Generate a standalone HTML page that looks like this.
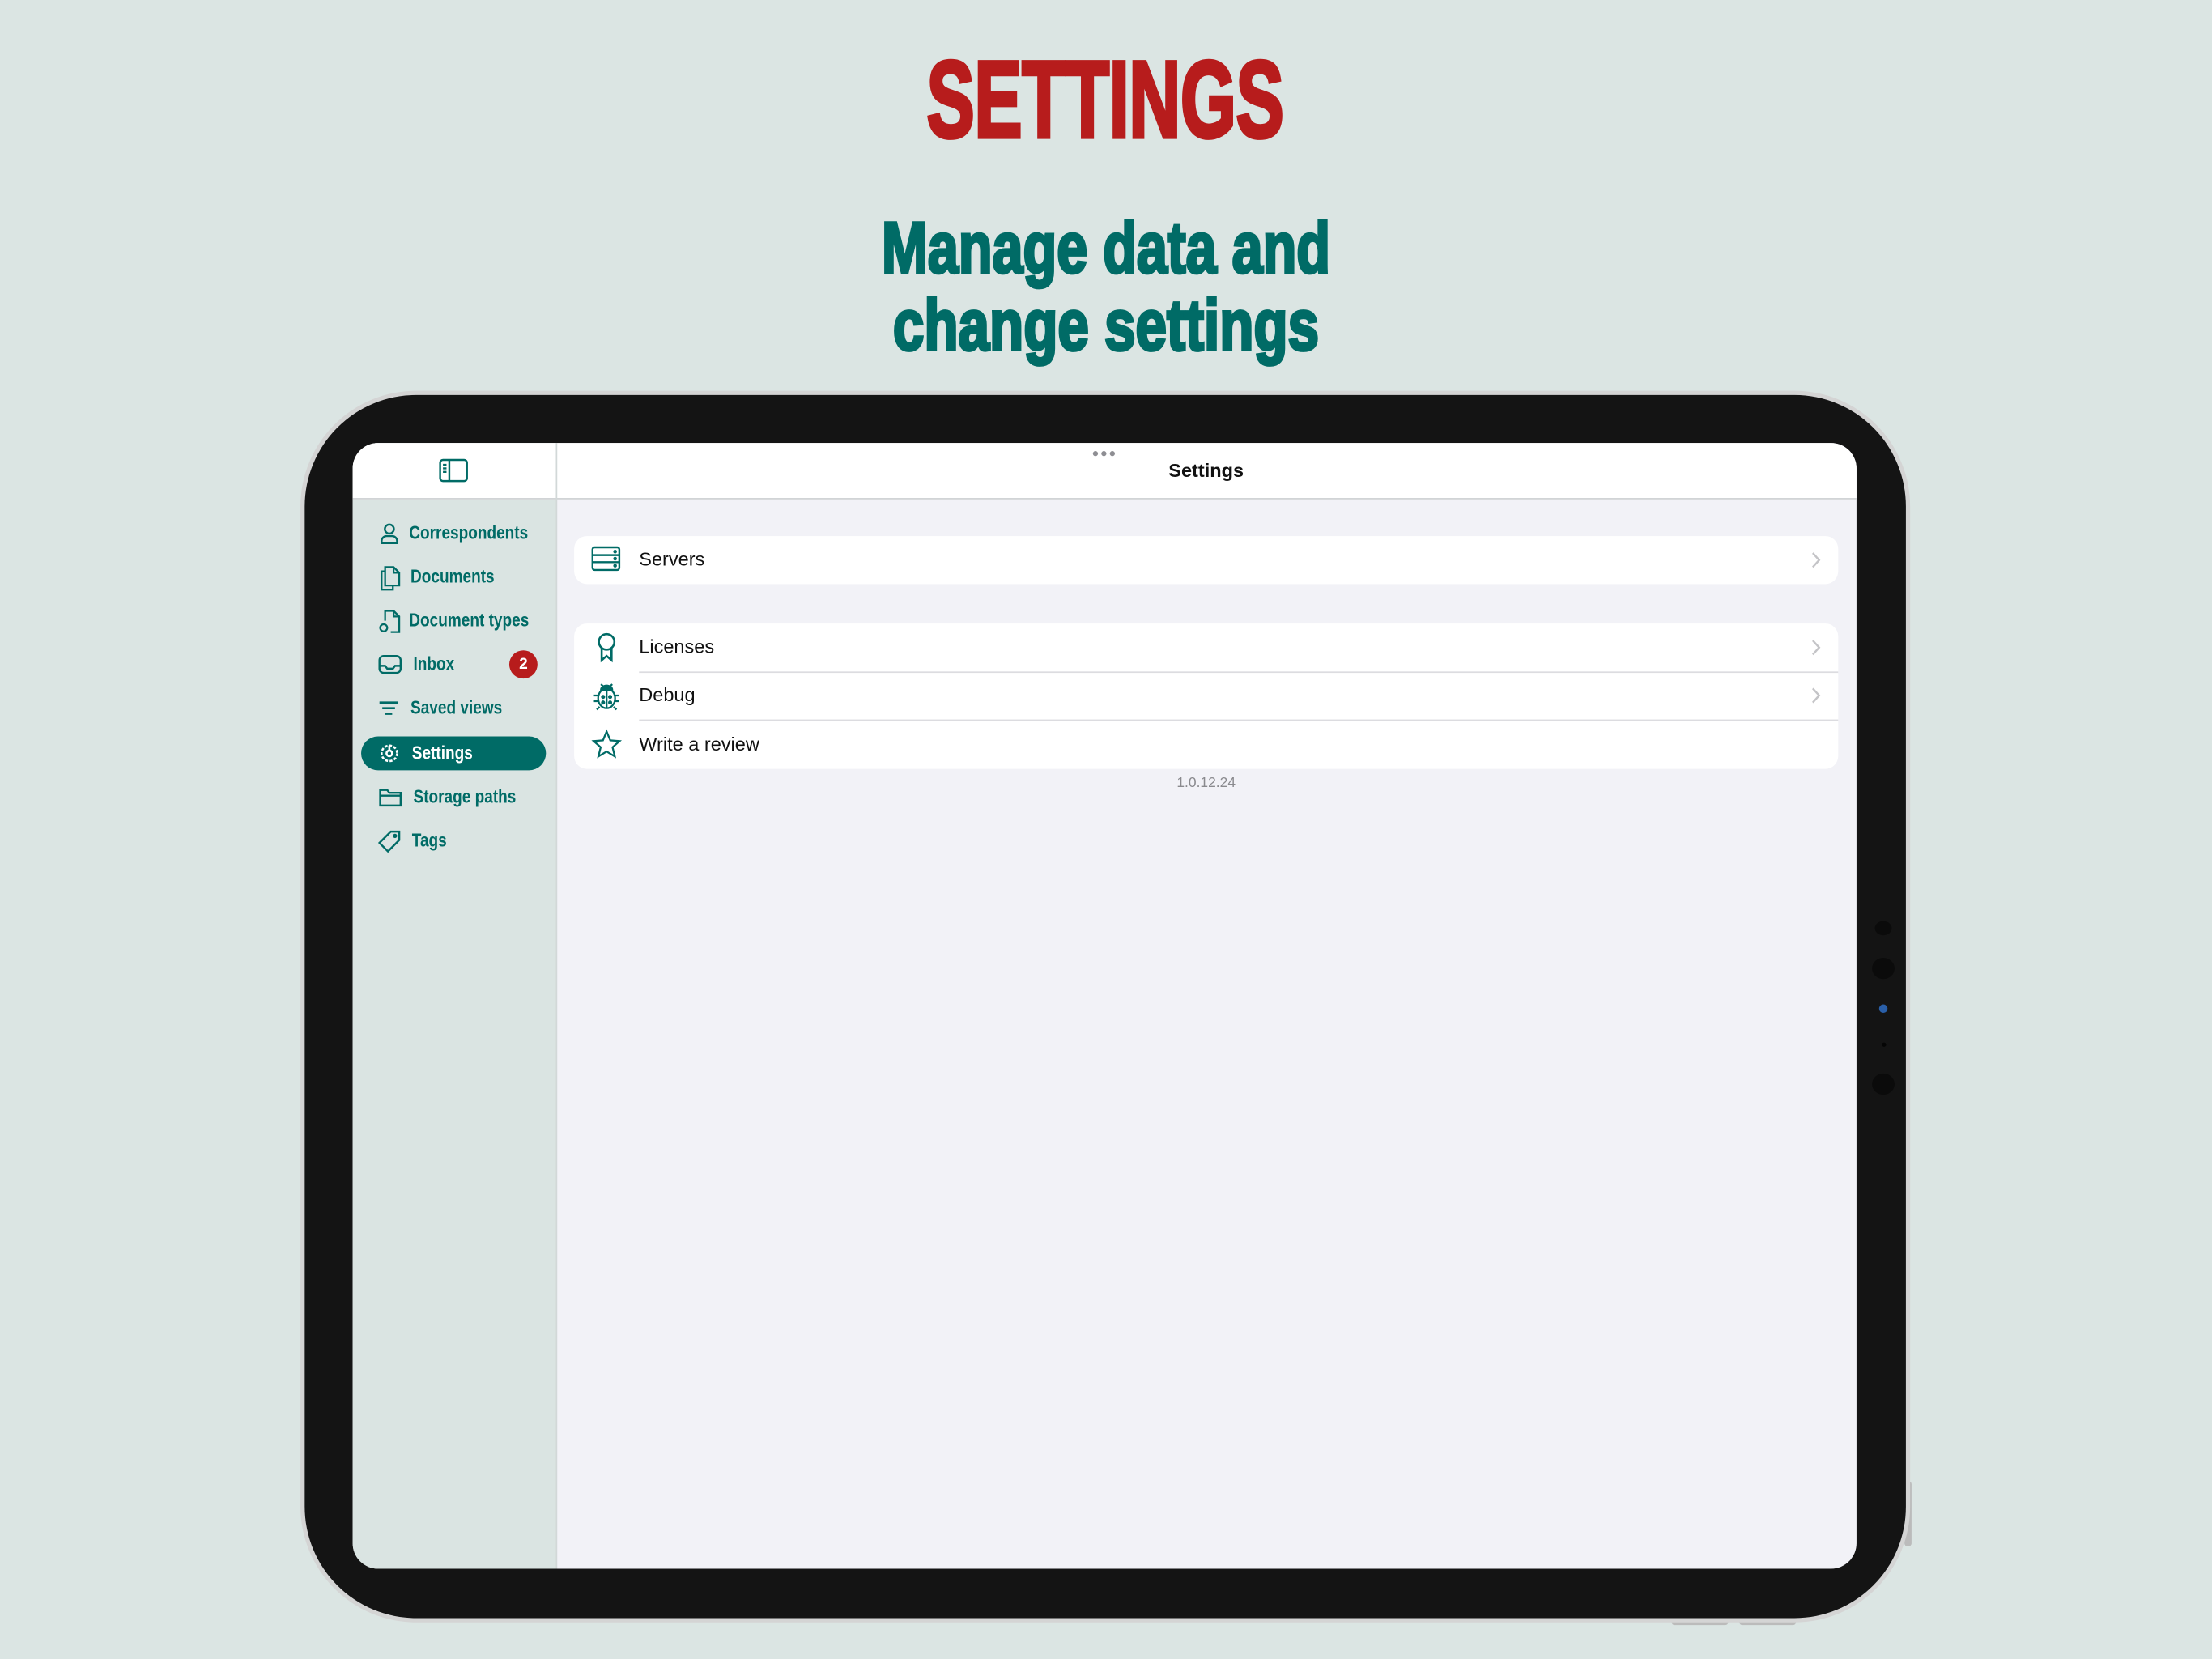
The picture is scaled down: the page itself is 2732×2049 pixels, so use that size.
<!DOCTYPE html>
<html><head><meta charset="utf-8">
<style>
html,body{margin:0;padding:0;width:2732px;height:2048px;overflow:hidden;background:#dbe5e3;}
#w{position:absolute;left:0;top:0;width:1568px;height:1176px;transform:scale(1.742347);transform-origin:0 0;font-family:"Liberation Sans",sans-serif;}
.abs{position:absolute}
.nav{position:absolute;left:262px;height:24px;line-height:24px;font-family:"Liberation Sans",sans-serif;font-weight:bold;font-size:13px;color:#006b66;}
.nav svg{position:absolute;left:6px;top:4px}
.nav span{position:absolute;left:28px;white-space:nowrap;transform:scaleX(0.84);transform-origin:0 50%}
.card{position:absolute;left:407px;width:896px;background:#fff;border-radius:9px;}
.row{position:absolute;left:0;width:896px;height:34px;}
.row .t{position:absolute;left:46px;top:0;line-height:34px;font-size:13.5px;color:#111;}
.row .ic{position:absolute;left:12px;top:6px}
.chev{position:absolute;right:12px;top:11px}
.sep{position:absolute;left:46px;right:0;height:1px;background:#dcdce0}
</style></head><body>
<div id="w">
<svg class="abs" style="left:0;top:0" width="1568" height="270">
<text x="657" y="97" textLength="253" lengthAdjust="spacingAndGlyphs" font-family="Liberation Sans Narrow, Liberation Sans, sans-serif" font-weight="bold" font-size="77" fill="#b71c1c" stroke="#b71c1c" stroke-width="3">SETTINGS</text>
<text x="625" y="193" textLength="318" lengthAdjust="spacingAndGlyphs" font-family="Liberation Sans Narrow, Liberation Sans, sans-serif" font-weight="bold" font-size="51" fill="#006b66" stroke="#006b66" stroke-width="2.2">Manage data and</text>
<text x="633" y="248" textLength="302" lengthAdjust="spacingAndGlyphs" font-family="Liberation Sans Narrow, Liberation Sans, sans-serif" font-weight="bold" font-size="51" fill="#006b66" stroke="#006b66" stroke-width="2.2">change settings</text>
</svg>
<!-- device -->
<div class="abs" style="left:1350px;top:1050px;width:5px;height:46px;background:#bbb;border-radius:2px"></div>
<div class="abs" style="left:1185px;top:1147px;width:40px;height:5px;background:#bbb;border-radius:2px"></div>
<div class="abs" style="left:1233px;top:1147px;width:40px;height:5px;background:#bbb;border-radius:2px"></div>
<div class="abs" style="left:213px;top:277px;width:1141px;height:873px;border-radius:82px;background:#d4d4d4;"></div>
<div class="abs" style="left:216px;top:280px;width:1135px;height:867px;border-radius:79px;background:#141414;"></div>
<div class="abs" style="left:1329px;top:653px;width:12px;height:10px;border-radius:50%;background:#0b0b0b"></div>
<div class="abs" style="left:1327px;top:679px;width:16px;height:15px;border-radius:50%;background:#0b0b0b"></div>
<div class="abs" style="left:1332px;top:712px;width:6px;height:6px;border-radius:50%;background:#2a5fa8"></div>
<div class="abs" style="left:1334px;top:739px;width:3px;height:3px;border-radius:50%;background:#050505"></div>
<div class="abs" style="left:1327px;top:761px;width:16px;height:15px;border-radius:50%;background:#0b0b0b"></div>
<!-- screen -->
<div class="abs" style="left:250px;top:314px;width:1066px;height:798px;border-radius:18px;overflow:hidden;background:#f2f2f7;">
  <div class="abs" style="left:0;top:0;width:144px;height:798px;background:#dae4e2"></div>
  <div class="abs" style="left:0;top:0;width:1066px;height:39px;background:#fff;border-bottom:1px solid #cfd2d4"></div>
  <div class="abs" style="left:144px;top:0;width:1px;height:798px;background:#d2d8d8"></div>
  <div class="abs" style="left:0;top:0;width:1066px;line-height:39px;text-align:center;font-size:13.5px;font-weight:bold;color:#111;padding-left:144px;box-sizing:border-box;left:0">Settings</div>
  <svg class="abs" style="left:524px;top:5px" width="18" height="5"><circle cx="2.5" cy="2.5" r="1.8" fill="#8e8e93"/><circle cx="8.5" cy="2.5" r="1.8" fill="#8e8e93"/><circle cx="14.5" cy="2.5" r="1.8" fill="#8e8e93"/></svg>
  <svg class="abs" style="left:61px;top:11px" width="21" height="17" fill="none" stroke="#006b66" stroke-width="1.4"><rect x="1" y="1" width="19" height="15" rx="2"/><line x1="7.5" y1="1" x2="7.5" y2="16"/><line x1="3" y1="4.5" x2="5.5" y2="4.5"/><line x1="3" y1="7" x2="5.5" y2="7"/><line x1="3" y1="9.5" x2="5.5" y2="9.5"/></svg>
</div>
<!-- sidebar items -->
<div class="nav" style="top:366px"><svg width="16" height="16" fill="none" stroke="#006b66" stroke-width="1.4"><circle cx="8" cy="5" r="3.2"/><path d="M2.5 15v-1.5a3.5 3.5 0 0 1 3.5-3.5h4a3.5 3.5 0 0 1 3.5 3.5V15z"/></svg><span>Correspondents</span></div>
<div class="nav" style="top:397px"><svg width="16" height="18" fill="none" stroke="#006b66" stroke-width="1.3"><path d="M5 4H2.5v13h8v-3"/><path d="M5 1h6l4 4v9H5z"/><path d="M11 1v4h4"/></svg><span style="left:29px">Documents</span></div>
<div class="nav" style="top:428px"><svg width="16" height="18" fill="none" stroke="#006b66" stroke-width="1.3"><path d="M5 8V1h6l4 4v11H9"/><path d="M11 1v4h4"/><circle cx="4" cy="13" r="2.5"/></svg><span>Document types</span></div>
<div class="nav" style="top:459px"><svg width="18" height="16" fill="none" stroke="#006b66" stroke-width="1.4"><rect x="1" y="2" width="15" height="12" rx="3"/><path d="M1 9h4l1.5 2h4L12 9h4"/></svg><span style="left:31px">Inbox</span></div>
<div class="abs" style="left:361px;top:461px;width:20px;height:20px;border-radius:50%;background:#b71c1c;color:#fff;font-size:11px;font-weight:bold;text-align:center;line-height:20px">2</div>
<div class="nav" style="top:490px"><svg width="16" height="16" fill="none" stroke="#006b66" stroke-width="1.5"><line x1="1" y1="4" x2="14" y2="4"/><line x1="3" y1="8" x2="12" y2="8"/><line x1="5" y1="12" x2="10" y2="12"/></svg><span style="left:29px">Saved views</span></div>
<div class="abs" style="left:256px;top:522px;width:131px;height:24px;border-radius:12px;background:#006b66"></div>
<div class="nav" style="top:522px;color:#fff"><svg width="16" height="16" fill="none" stroke="#fff" stroke-width="1.5"><circle cx="8" cy="8" r="5.5" stroke-dasharray="2 1.2"/><circle cx="8" cy="8" r="2"/><line x1="8" y1="2.5" x2="8" y2="6"/></svg><span style="left:30px">Settings</span></div>
<div class="nav" style="top:553px"><svg width="18" height="16" fill="none" stroke="#006b66" stroke-width="1.4"><path d="M1.5 3h5l1.5 2h8v9h-14.5z"/><line x1="1.5" y1="7" x2="16" y2="7"/></svg><span style="left:31px">Storage paths</span></div>
<div class="nav" style="top:584px"><svg width="17" height="17" fill="none" stroke="#006b66" stroke-width="1.4"><path d="M9 1.5h6v6l-8 8-6-6z"/><circle cx="12" cy="4.5" r="0.8" fill="#006b66"/></svg><span style="left:30px">Tags</span></div>
<!-- cards -->
<div class="card" style="top:380px;height:34px">
  <div class="row" style="top:0"><svg class="ic" width="22" height="20" fill="none" stroke="#006b66" stroke-width="1.4"><rect x="1" y="2" width="19" height="16" rx="1.5"/><line x1="1" y1="7.5" x2="20" y2="7.5"/><line x1="1" y1="12.5" x2="20" y2="12.5"/><circle cx="17" cy="5" r=".6" fill="#006b66"/><circle cx="17" cy="10" r=".6" fill="#006b66"/><circle cx="17" cy="15" r=".6" fill="#006b66"/></svg><div class="t">Servers</div><svg class="chev" width="8" height="12" fill="none" stroke="#c4c4c7" stroke-width="1.4"><path d="M2 1l4.5 5L2 11"/></svg></div>
</div>
<div class="card" style="top:442px;height:103px">
  <div class="row" style="top:0"><svg class="ic" width="22" height="22" fill="none" stroke="#006b66" stroke-width="1.5"><circle cx="11" cy="7" r="5.5"/><path d="M7.5 11.5V20l3.5-3 3.5 3v-8.5"/></svg><div class="t">Licenses</div><svg class="chev" width="8" height="12" fill="none" stroke="#c4c4c7" stroke-width="1.4"><path d="M2 1l4.5 5L2 11"/></svg></div>
  <div class="sep" style="top:34px"></div>
  <div class="row" style="top:34px"><svg class="ic" width="22" height="22" fill="none" stroke="#006b66" stroke-width="1.3"><ellipse cx="11" cy="13" rx="6" ry="7"/><path d="M7 7a4 3 0 0 1 8 0z" fill="#006b66"/><path d="M7 3l2 2M15 3l-2 2M5 11H2M17 11h3M5 15H2M17 15h3M6 19l-2 2M16 19l2 2"/><line x1="11" y1="8" x2="11" y2="20"/><circle cx="8.5" cy="12" r=".8" fill="#006b66"/><circle cx="13.5" cy="12" r=".8" fill="#006b66"/><circle cx="8.5" cy="16" r=".8" fill="#006b66"/><circle cx="13.5" cy="16" r=".8" fill="#006b66"/></svg><div class="t">Debug</div><svg class="chev" width="8" height="12" fill="none" stroke="#c4c4c7" stroke-width="1.4"><path d="M2 1l4.5 5L2 11"/></svg></div>
  <div class="sep" style="top:68px"></div>
  <div class="row" style="top:69px"><svg class="ic" width="22" height="22" fill="none" stroke="#006b66" stroke-width="1.3"><path d="M11 1.5l2.6 6.3 6.6.5-5 4.4 1.6 6.5L11 15.7 5.2 19.2l1.6-6.5-5-4.4 6.6-.5z"/></svg><div class="t">Write a review</div></div>
</div>
<div class="abs" style="left:394px;width:922px;top:550px;text-align:center;font-size:10px;color:#8a8a8e">1.0.12.24</div>
</div>
</body></html>
